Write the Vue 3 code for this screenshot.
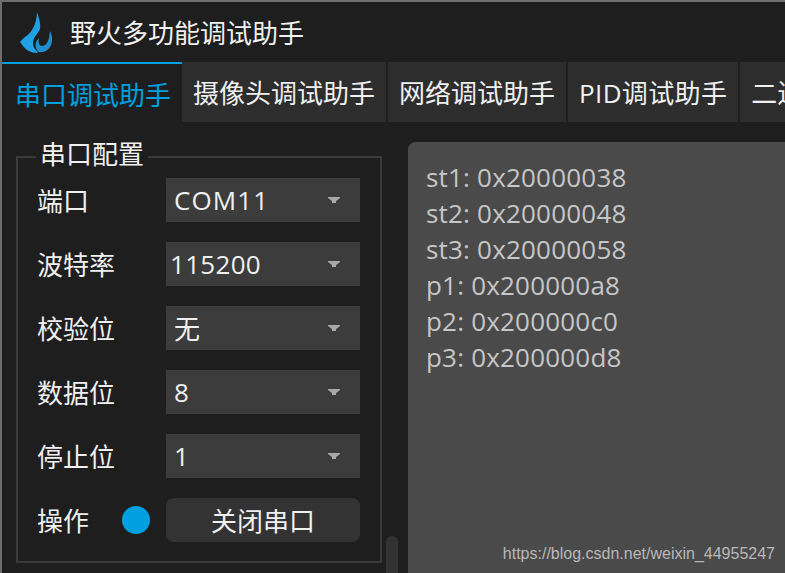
<script setup>
const rows = [
  { label: '端口', value: 'COM11', cls: 'com' },
  { label: '波特率', value: '115200', cls: 'baud' },
  { label: '校验位', value: '无', cls: '' },
  { label: '数据位', value: '8', cls: '' },
  { label: '停止位', value: '1', cls: '' },
]
const tabs = [
  { text: '摄像头调试助手', cls: '' },
  { text: '网络调试助手', cls: '' },
  { text: 'PID调试助手', cls: 'pid' },
  { text: '二进制协议助手', cls: '' },
]
const lines = ['st1: 0x20000038', 'st2: 0x20000048', 'st3: 0x20000058', 'p1: 0x200000a8', 'p2: 0x200000c0', 'p3: 0x200000d8']
</script>

<template>
  <div class="window">
    <header class="titlebar">
      <svg class="logo" width="40" height="46" viewBox="16 10 40 46">
        <path fill="#22a0e6" d="M37 12C39 18 41 24 40 29C38 34 33 37 33 43C33 47 35 50 38 52L37 53C31 53 26 50 23 46L20 42C24 37 29 35 32 30C35 25 37 19 37 12z"/>
        <path fill="#1f8fd0" d="M50 31C52 35 53 40 51 45C49 50 44 53 39 52C36 50 35 46 36 42C37 40 38 39 39 38C38 42 39 46 42 46C46 46 48 42 49 38z"/>
      </svg>
      <span class="title">野火多功能调试助手</span>
    </header>

    <nav class="tabs">
      <div class="tab active">串口调试助手</div>
      <div v-for="t in tabs" :key="t.text" class="tab" :class="t.cls">{{ t.text }}</div>
    </nav>

    <main class="content">
      <aside class="side">
        <fieldset class="group">
          <legend>串口配置</legend>
          <div v-for="r in rows" :key="r.label" class="row">
            <span class="label">{{ r.label }}</span>
            <div class="combo" :class="r.cls">
              <span>{{ r.value }}</span>
              <svg class="arrow" width="12" height="6" viewBox="0 0 12 6"><path fill="#a8a8a8" d="M0 0h12v1L8 4v2H4V4L0 1z"/></svg>
            </div>
          </div>
          <div class="row">
            <span class="label op">操作</span>
            <i class="led"></i>
            <button class="btn">关闭串口</button>
          </div>
        </fieldset>
        <div class="scroll"><div class="thumb"></div></div>
      </aside>
      <section class="output">
        <div v-for="l in lines" :key="l">{{ l }}</div>
      </section>
    </main>

    <div class="mark">https://blog.csdn.net/weixin_44955247</div>
  </div>
</template>

<style>
html, body { margin: 0; overflow: hidden; background: #1e1e1e; }
</style>

<style scoped>
.window {
  position: relative;
  width: 785px;
  height: 573px;
  box-sizing: border-box;
  border-top: 2px solid #6e6e6e;
  border-left: 2px solid #6e6e6e;
  background: #1e1e1e;
  overflow: hidden;
  font-family: "Open Sans", "Noto Sans CJK SC", sans-serif;
  color: #f0f0f0;
  display: flex;
  flex-direction: column;
}
.titlebar {
  height: 60px;
  flex: none;
  display: flex;
  align-items: center;
  padding-left: 14px;
  gap: 14px;
}
.logo { flex: none; margin-top: 2px; }
.title { font-size: 26px; line-height: 60px; font-family: "Noto Sans CJK SC", sans-serif; color: #f2f2f2; }
.tabs { height: 60px; flex: none; display: flex; gap: 2px; white-space: nowrap; overflow: hidden; }
.tab {
  flex: none;
  box-sizing: border-box;
  height: 60px;
  padding: 0 11px;
  background: #2d2d2d;
  font-size: 26px;
  line-height: 62px;
  color: #f0f0f0;
}
.tab.pid { letter-spacing: 0.35px; }
.tab.active {
  width: 180px;
  padding: 0 0 0 13px;
  margin-right: -2px;
  background: #1e1e1e;
  border-top: 2px solid #00a0e0;
  line-height: 62px;
  color: #00a0e0;
}
.content { flex: 1; display: flex; min-height: 0; padding-top: 20px; }
.side { width: 406px; flex: none; display: flex; }
.group {
  box-sizing: border-box;
  width: 366px;
  height: 421px;
  margin: 0 0 0 14px;
  padding: 6px 20px 0 19px;
  border: 2px solid #3a3a3a;
  min-width: 0;
  display: flex;
  flex-direction: column;
  gap: 20px;
}
legend {
  font-size: 26px;
  line-height: 30px;
  padding: 0 4px;
  margin-left: -1px;
  color: #f0f0f0;
  transform: translateY(-3px);
}
.row { display: flex; align-items: center; height: 44px; }
.label { width: 129px; font-size: 26px; flex: none; color: #f0f0f0; }
.label.op { width: 85px; }
.combo {
  flex: none;
  box-sizing: border-box;
  width: 194px;
  height: 44px;
  background: #3c3c3c;
  display: flex;
  align-items: center;
  justify-content: space-between;
  padding: 0 20px 0 8px;
  font-size: 26px;
}
.combo.com span { letter-spacing: 1.1px; }
.combo.baud { padding-left: 4px; }
.combo.baud span { letter-spacing: 0.3px; }
.arrow { flex: none; }
.led { width: 28px; height: 28px; border-radius: 50%; background: #00a0e0; margin-right: 16px; flex: none; }
.btn {
  width: 194px;
  height: 44px;
  flex: none;
  border: 0;
  border-radius: 8px;
  background: #333;
  color: #f0f0f0;
  font: inherit;
  font-size: 26px;
  padding: 0;
}
.scroll { width: 12px; margin-left: 4px; padding-top: 394px; flex: none; }
.thumb { height: 40px; background: #333; border-radius: 6px 6px 0 0; }
.output {
  flex: 1;
  background: #4a4a4a;
  border-top-left-radius: 8px;
  padding: 17px 0 0 18px;
  font-size: 26px;
  line-height: 36px;
  letter-spacing: 0.2px;
  color: #c6c6c6;
}
.mark {
  position: absolute;
  right: 10px;
  bottom: 9px;
  font-family: "Liberation Sans", sans-serif;
  font-size: 16px;
  line-height: 20px;
  color: #b8b8b8;
}
</style>
